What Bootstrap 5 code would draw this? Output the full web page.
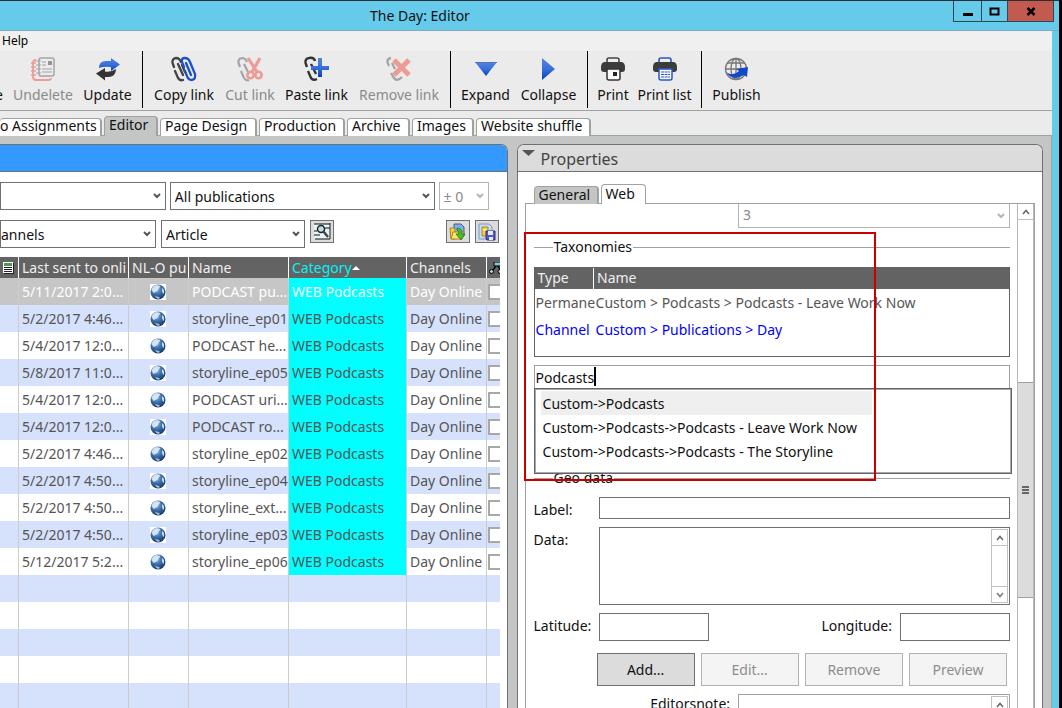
<!DOCTYPE html>
<html lang="en">
<head>
<meta charset="utf-8">
<meta name="viewport" content="width=device-width, initial-scale=1">
<title>The Day: Editor</title>
<link href="https://cdn.jsdelivr.net/npm/bootstrap@5.3.0/dist/css/bootstrap.min.css" rel="stylesheet">
<style>
  :root { --line: #a0a2a1; --dark: #636363; --edge: #707070; --sky: #66cbea; }
  body { font: 14px/20px "Noto Sans", "Open Sans", sans-serif; color: #111; background: #000; }
  button, input, select, textarea { font: inherit; color: inherit; }
  .app-window { height: 100vh; margin-right: 3px; background: var(--sky); border-top: 1px solid #2b2f36; overflow: hidden; }
  .title-bar { height: 30px; border-bottom: 1px solid #7fa9bd; }
  .title-text { flex: 1 1 0; padding-left: 370px; line-height: 30px; }
  .win-btn { height: 21px; border: 1px solid #34474f; border-top: 0; background: none; padding: 0; display: grid; place-items: center; margin-left: -1px; }
  .win-btn.sm-w { width: 29px; } .win-btn.md-w { width: 27px; }
  .win-btn.close-w { width: 47px; background: #c35a50; margin-right: 5px; }
  .frame { margin-right: 7px; background: #ebebeb; min-height: 0; }
  .menu-bar { height: 20px; background: #f0f0f0; font-size: 12px; }
  .menu-bar a { color: #000; text-decoration: none; padding-left: 2px; }
  .tool-bar { height: 60px; border-bottom: 1px solid var(--line); }
  .tool { border: 0; background: none; padding: 4px 0 0; width: 60px; margin-right: 10px; white-space: nowrap; display: flex; flex-direction: column; align-items: center; flex: none; height: 58px; }
  .tool svg { width: 28px; height: 28px; margin-bottom: 2px; flex: none; }
  .tool:disabled { color: #8a8a8a; }
  .tool:disabled svg { opacity: .42; }
  .w3 { width: 3px; } .w30 { width: 30px; } .w49 { width: 49px; } .w50 { width: 50px; } .w62 { width: 62px; } .w63 { width: 63px; } .w82 { width: 82px; } .w53 { width: 53px; } .w57 { width: 57px; }
  .tool-sep { width: 1px; height: 57px; background: #000; margin-right: 10px; flex: none; }
  .view-tabs { height: 25px; padding-top: 5px; border-bottom: 1px solid var(--line); }
  .view-tab { height: 18px; line-height: 14px; padding: 0 4px 3px; margin: 2px 2px 0 0; border: 1px solid var(--line); border-bottom: 0; border-right-width: 2px; border-radius: 4px 4px 0 0; background: #fff; white-space: nowrap; text-align: left; flex: none; }
  .view-tab.active { background: #c4c6c5; height: 20px; margin-top: 0; margin-bottom: -1px; }
  .workspace { background: #c4c6c5; padding: 8px 8px 0 0; gap: 9px; border-right: 1px solid var(--line); min-height: 0; }
  .pane { background: #fff; border: 1px solid var(--edge); border-bottom: 0; border-radius: 7px 7px 0 0; min-width: 0; overflow: hidden; }
  .pane-left { flex: 508 1 0; border-left: 0; border-top-left-radius: 0; }
  .pane-right { flex: 526 1 0; }
  .pane-head { height: 27px; border-bottom: 1px solid var(--edge); background: #dcdcdc; color: #444; font-size: 16px; }
  .pane-left .pane-head { background: #39f; }
  .combo { appearance: none; border: 1px solid var(--edge); border-radius: 0; height: 28px; padding: 1px 20px 0 4px; min-width: 0; color: #111;
    background: #fff url("data:image/svg+xml,%3Csvg xmlns='http://www.w3.org/2000/svg' viewBox='0 0 8 6'%3E%3Cpath d='M1 1l3 3 3-3' fill='none' stroke='%23555' stroke-width='2'/%3E%3C/svg%3E") no-repeat right 4px center / 8px 6px; }
  .combo:disabled { border-color: #b4b4b4; color: #888; opacity: 1; background-image: url("data:image/svg+xml,%3Csvg xmlns='http://www.w3.org/2000/svg' viewBox='0 0 8 6'%3E%3Cpath d='M1 1l3 3 3-3' fill='none' stroke='%23b4b4b4' stroke-width='2'/%3E%3C/svg%3E"); }
  .filters { padding: 10px 18px 0 0; gap: 4px; }
  .filters-two { padding: 10px 8px 9px 0; gap: 5px; }
  .icon-btn { width: 24px; height: 23px; padding: 0; border: 1px solid var(--edge); background: #dcdcdc; display: grid; place-items: center; flex: none; }
  .grid-scroll { margin-right: 7px; overflow: hidden; min-height: 0; }
  .stories { table-layout: fixed; width: 100%; border-collapse: separate; border-spacing: 0; color: #555; }
  .stories th, .stories td { padding: 0 0 0 3px; border-right: 1px solid #ccc; white-space: nowrap; overflow: hidden; font-weight: 400; height: 27px; }
  .stories th:last-child, .stories td:last-child { border-right: 0; padding-left: 1px; }
  .stories th { height: 21px; background: var(--dark); color: #efefef; border-color: #fff; }
  .stories th.sorted { color: #00f4f4; }
  .stories tbody tr:nth-child(even) { background: #d6e1fc; }
  .stories tbody tr.picked { background: #c6c6c6; color: #fff; }
  .stories .cat { background: #0ff; }
  .stories .globe { padding: 0 2px 0 0; text-align: center; }
  .stories svg { display: block; }
  .globe svg { margin: auto; }
  .stories input { appearance: none; display: block; width: 16px; height: 16px; border: 2px solid #a8a8a8; background: #fff; margin: 0; }
  .props { padding: 12px 7px 0 7px; min-height: 0; }
  .prop-tabs { padding-left: 9px; height: 20px; position: relative; z-index: 1; }
  .prop-tab { height: 18px; line-height: 14px; margin-top: 2px; padding: 0 4px 2px; border: 1px solid var(--line); border-right-width: 2px; border-bottom: 0; border-radius: 4px 4px 0 0; background: #c4c6c5; width: 65px; text-align: left; margin-right: 2px; }
  .prop-tab.active { background: #fff; height: 20px; margin-top: 0; width: 45px; border-right-width: 1px; }
  .tab-page { border: 1px solid var(--line); border-bottom: 0; margin-top: -1px; min-height: 0; position: relative; }
  .form-area { padding: 0 7px 0 8px; min-width: 0; }
  .top-combo { width: 272px; height: 24px; border-top: 0; margin-left: auto; display: block; padding-bottom: 4px; }
  .group-line { display: flex; align-items: center; gap: 1px; height: 20px; margin: 9px 0 0; font-size: 14px; font-weight: 400; line-height: 22px; }
  .group-line::before { content: ""; width: 19px; border-top: 1px solid var(--line); }
  .group-line::after { content: ""; flex: 1; border-top: 1px solid var(--line); }
  .group-line.geo-title { margin-top: 79px; }
  .taxa-box { border: 1px solid var(--dark); height: 90px; margin-top: 10px; }
  .taxa { width: 100%; table-layout: fixed; color: #555; white-space: nowrap; }
  .taxa th { background: var(--dark); color: #efefef; font-weight: 400; height: 21px; padding: 0 3px 1px; line-height: 20px; border-left: 1px solid #fff; }
  .taxa th:first-child { border-left: 0; }
  .taxa td { height: 27px; padding: 0 0 0 1px; }
  .taxa td + td { padding-left: 2px; }
  .taxa tr.own { color: #00f; }
  .entry { position: relative; margin-top: 8px; }
  .field { display: block; width: 100%; height: 22px; border: 1px solid var(--edge); border-radius: 0; padding: 0 1px; background: #fff; outline: 0; resize: none; }
  .entry .field { height: 24px; padding-top: 1px; border-color: var(--line); }
  .caret { position: absolute; left: 60px; top: 2px; width: 2px; height: 19px; background: #000; }
  .suggest { position: absolute; left: 0; right: -2px; top: 23px; height: 86px; z-index: 3; background: #fff; border: 1px solid var(--dark); outline: 1px solid #a8a8a8; outline-offset: -2px; padding: 2px 0 0 6px; margin: 0; list-style: none; }
  .suggest button { display: block; width: 331px; height: 24px; border: 0; background: none; text-align: left; padding: 2px 2px 0; white-space: nowrap; }
  .suggest .hot { background: #efefef; }
  .geo { display: grid; grid-template-columns: 65px 1fr; row-gap: 8px; margin-top: 9px; }
  .geo label { line-height: 25px; height: 22px; }
  .field.coord { width: 110px; height: 28px; }
  .field.memo { height: 78px; }
  .field.soft { border-color: var(--line); }
  .with-bar { position: relative; }
  .note-box { width: 272px; }
  .mini-bar { position: absolute; right: 2px; top: 2px; bottom: 2px; width: 17px; border: 1px solid #c0c0c0; display: flex; flex-direction: column; justify-content: space-between; background: #fff; }
  .bar-btn { height: 16px; padding: 0; border: 0; background: #fff; display: grid; place-items: center; }
  .bar-btn.up { border-bottom: 1px solid #c0c0c0; } .bar-btn.down { border-top: 1px solid #c0c0c0; }
  .geo-actions { gap: 6px; padding-left: 63px; padding-right: 3px; margin-top: 12px; }
  .act { flex: 1 1 0; height: 33px; border: 1px solid var(--edge); background: #dcdcdc; padding: 0; }
  .act:disabled { border-color: #b0b3b3; background: #f4f4f4; color: #8d8d8d; }
  .side-bar { width: 17px; border-left: 1px solid #b8b8b8; border-right: 1px solid #b8b8b8; }
  .thumb { flex: 215 1 0; background: #dcdcdc; border: solid var(--line); border-width: 1px 0; }
  .track-a { flex: 162 1 0; } .track-b { flex: 110 1 0; }
  .callout-box { position: absolute; left: -2px; top: 28px; width: 352px; height: 249px; border: 2px solid #c80000; z-index: 4; pointer-events: none; }
</style>
<script src="https://cdn.jsdelivr.net/npm/bootstrap@5.3.0/dist/js/bootstrap.bundle.min.js"></script>
</head>
<body class="overflow-hidden">
<svg width="0" height="0" class="position-absolute" aria-hidden="true">
  <defs>
    <radialGradient id="ball" cx=".4" cy=".3" r=".75"><stop offset="0" stop-color="#8fbbe6"/><stop offset=".5" stop-color="#3a6ca8"/><stop offset="1" stop-color="#16355f"/></radialGradient>
    <linearGradient id="blu" x2="0" y2="1"><stop offset="0" stop-color="#4f86e2"/><stop offset=".5" stop-color="#3a70d8"/><stop offset="1" stop-color="#0a3fc0"/></linearGradient>
    <symbol id="earth" viewBox="0 0 16 16"><rect width="16" height="16" fill="#fff"/><circle cx="8" cy="8" r="7.500" fill="url(#ball)"/><path d="M1.500 6q1-4 5-5l4 1-2 3-1 2-4 2zM12 4l2 2v3l-1 1-1-3z" fill="#e8f0f8" opacity=".85"/><path d="M5 12l4 1 1 1-2 1q-2-1-3-3z" fill="#c8dcf0" opacity=".8"/></symbol>
    <symbol id="up" viewBox="0 0 8 6"><path d="M1 5l3-3.500 3 3.500" fill="none" stroke="#666" stroke-width="1.500"/></symbol>
    <symbol id="down" viewBox="0 0 8 6"><path d="M1 1l3 3.500 3-3.500" fill="none" stroke="#777" stroke-width="1.500"/></symbol>
  </defs>
</svg>
<div class="app-window d-flex flex-column">
  <header class="title-bar d-flex flex-shrink-0">
    <div class="title-text">The Day: Editor</div>
    <button class="win-btn sm-w" aria-label="Minimize"><svg width="11" height="12"><path d="M1 9.500h10" stroke="#000" stroke-width="3"/></svg></button>
    <button class="win-btn md-w" aria-label="Maximize"><svg width="11" height="9"><path d="M1.500 1.500h8v6h-8z" fill="none" stroke="#000" stroke-width="2"/></svg></button>
    <button class="win-btn close-w" aria-label="Close"><svg width="10" height="9"><path d="M1.500 1l7 7M8.500 1l-7 7" stroke="#000" stroke-width="2.500"/></svg></button>
  </header>
  <div class="frame d-flex flex-column flex-grow-1">
    <nav class="menu-bar flex-shrink-0"><a href="#">Help</a></nav>
    <div class="tool-bar d-flex flex-shrink-0 overflow-hidden">
      <button class="tool w3" aria-label="Delete"><svg></svg><span class="align-self-end">e</span></button>
      <button class="tool" disabled><svg viewBox="0 0 28 28"><path d="M7 5q-3 0-3 3v14q0 3 3 3h12q3 0 3-2" fill="none" stroke="#f03020" stroke-width="1.800"/><path d="M2 8h5M2 12h5M2 16h5M2 20h5" stroke="#f03020" stroke-width="1.500"/><rect x="10" y="3" width="15" height="18" rx="2" fill="#eee" stroke="#444" stroke-width="1.500"/><path d="M7 6h5M7 10h5M7 14h5M7 18h5M13 7h4M13 10h4M13 14h10M13 17h10" stroke="#444" stroke-width="1.200"/><path d="M19 6h4v4h-4z" fill="#222"/></svg>Undelete</button>
      <button class="tool w49"><svg viewBox="0 0 28 28"><path d="M5 13q0-7 7-7h5V3l9 6.500-9 6.500v-4q-7-1-12 1z" fill="url(#blu)"/><path d="M22 14q0 7-7 8h-4v3.500L2 18.500 11 13v3.500q6 1 11-2.500z" fill="#333"/></svg>Update</button>
      <div class="tool-sep"></div>
      <button class="tool w62"><svg viewBox="0 0 28 28"><g fill="none" stroke-width="2.300" stroke-linecap="round"><path d="M4 12L2.500 8Q2 3.500 6 3q3.500 0 5 4M5 16l3 7q2 3 5 2M8 9l5 11M12 10l3 7" stroke="#444"/><path d="M14 12l-2-5q-1-4 3-4 3.500 0 5 4l5 12q1 5-3 6-4 0-5-4l-2-5M16 8l5 12" stroke="#1c50c8"/></g></svg>Copy link</button>
      <button class="tool w50" disabled><svg viewBox="0 0 28 28"><path d="M4 12L2.500 8Q2 3.500 6 3q3.500 0 5 4M5 16l3 7q2 3 5 2M8 9l5 10" fill="none" stroke="#444" stroke-width="2.200"/><path d="M12 3l9 14M24 3l-8 14" stroke="#f03020" stroke-width="3.200"/><circle cx="14.500" cy="20" r="3.200" fill="none" stroke="#f03020" stroke-width="2.600"/><circle cx="22.500" cy="20" r="3.200" fill="none" stroke="#f03020" stroke-width="2.600"/></svg>Cut link</button>
      <button class="tool w63"><svg viewBox="0 0 28 28"><path d="M4 12L2.500 8Q2 3.500 6 3q5-1 6 3M5 16l3 7q2 3 6 1M8 9l5 10" fill="none" stroke="#333" stroke-width="2.400"/><path d="M15 3h4v8h7v4h-7v7h-4v-7H8v-4h7z" fill="url(#blu)"/></svg>Paste link</button>
      <button class="tool w82" disabled><svg viewBox="0 0 28 28"><path d="M4 11Q0 4 6 3M7 8l3 6M6 18l3 5q3 4 8-1" fill="none" stroke="#444" stroke-width="2.300"/><path d="M9 5l15 15M24 5L9 20" stroke="#f03020" stroke-width="5"/></svg>Remove link</button>
      <div class="tool-sep"></div>
      <button class="tool w49"><svg viewBox="0 0 28 28"><path d="M3 7h22L14 21z" fill="url(#blu)"/><path d="M3 7.500h22" stroke="#5a6fb0"/></svg>Expand</button>
      <button class="tool w57"><svg viewBox="0 0 28 28"><path d="M7 3v22l13-11z" fill="url(#blu)"/></svg>Collapse</button>
      <div class="tool-sep"></div>
      <button class="tool w30"><svg viewBox="0 0 28 28"><path d="M8 8V5q0-2 2-2h8q2 0 2 2v3" fill="#eee" stroke="#444" stroke-width="1.600"/><path d="M5 7h18q3 1 3 5v2q0 3-3 3H5q-3 0-3-3v-2q0-4 3-5z" fill="#3c3c3c"/><path d="M8 14h13v9q0 2-2 2h-9q-2 0-2-2z" fill="#f8f8f8" stroke="#333" stroke-width="1.500"/><path d="M14 17h4v4h-4z" fill="#222"/></svg>Print</button>
      <button class="tool w53"><svg viewBox="0 0 28 28"><path d="M8 8V5q0-2 2-2h8q2 0 2 2v3" fill="#eee" stroke="#2458c8" stroke-width="1.600"/><path d="M5 7h18q3 1 3 5v2q0 3-3 3H5q-3 0-3-3v-2q0-4 3-5z" fill="#3c3c3c"/><path d="M8 14h13v9q0 2-2 2h-9q-2 0-2-2z" fill="#f8f8f8" stroke="#2458c8" stroke-width="1.500"/><path d="M10 17h9M10 19.500h9M10 22h9" stroke="#2458c8" stroke-dasharray="3 .600"/></svg>Print list</button>
      <div class="tool-sep"></div>
      <button class="tool w49"><svg viewBox="0 0 28 28"><g fill="none" stroke="#777" stroke-width="1.300"><circle cx="13" cy="14" r="10.500"/><ellipse cx="13" cy="14" rx="5" ry="10.500"/><path d="M13 3v22M3 14h20M5 8h16"/></g><path d="M3 17q7 5 13-1l-3-2 12-2-1 10-3-2q-11 7-18-3z" fill="#1048c8"/></svg>Publish</button>
    </div>
    <nav class="view-tabs d-flex flex-shrink-0" aria-label="Views">
      <button class="view-tab ps-0 border-start-0" style="width:102px">o Assignments</button>
      <button class="view-tab active" style="width:54px">Editor</button>
      <button class="view-tab" style="width:97px">Page Design</button>
      <button class="view-tab" style="width:86px">Production</button>
      <button class="view-tab" style="width:63px">Archive</button>
      <button class="view-tab" style="width:62px">Images</button>
      <button class="view-tab" style="width:115px">Website shuffle</button>
    </nav>
    <main class="workspace d-flex flex-grow-1">
      <section class="pane pane-left d-flex flex-column">
        <div class="pane-head flex-shrink-0"></div>
        <div class="filters d-flex flex-shrink-0">
          <select class="combo" style="flex:1 1 166px" aria-label="Source"><option></option></select>
          <select class="combo" style="flex:1 1 265px" aria-label="Publication"><option>All publications</option></select>
          <select class="combo flex-shrink-0" style="width:50px" disabled aria-label="Day offset"><option>± 0</option></select>
        </div>
        <div class="filters-two d-flex flex-shrink-0">
          <select class="combo ps-0" style="width:156px" aria-label="Channel"><option>annels</option></select>
          <select class="combo" style="width:144px" aria-label="Content type"><option>Article</option></select>
          <button class="icon-btn" aria-label="Search"><svg width="17" height="17"><path d="M0 1h17v15H0z" fill="#e8f4f8"/><path d="M16 0v16H1M0 1h16M0 8h3M0 12h6M11 5h5" fill="none" stroke="#111"/><circle cx="7" cy="6" r="3.500" fill="#bde" stroke="#222" stroke-width="1.500"/><path d="M9 8l5 6" stroke="#444" stroke-width="2.500"/></svg></button>
          <button class="icon-btn ms-auto" aria-label="Load search"><svg width="18" height="18"><path d="M5 1h7l3 3v9H5z" fill="#7ab0e8" stroke="#558"/><path d="M1 5h4l1 1v10H2z" fill="#f5d040" stroke="#a8842a"/><path d="M2 16l2-7h11l-2 7z" fill="#ffe466" stroke="#a8842a"/><path d="M8 5q5 0 5 6h3l-4 6-5-6h3q0-3-2-4z" fill="#4cba2c" stroke="#267a18" stroke-width=".800"/></svg></button>
          <button class="icon-btn" aria-label="Save search"><svg width="18" height="18"><path d="M1 1h10l3 3v12H1z" fill="#c9dcf5" stroke="#7898c0"/><path d="M4 4h6v9H4z" fill="#f5cf3c" stroke="#a8842a"/><path d="M5 7h4" stroke="#fff"/><path d="M8 8h9v9H9l-1-1z" fill="#5458c0" stroke="#2d3080"/><path d="M10 8h5v4h-5zM11 14h4v3h-4z" fill="#e4e8ff"/></svg></button>
        </div>
        <div class="grid-scroll flex-grow-1">
          <table class="stories">
            <colgroup><col style="width:19px"><col style="width:110px"><col style="width:60px"><col style="width:100px"><col style="width:118px"><col style="width:80px"><col></colgroup>
            <thead><tr>
              <th><svg width="11" height="12"><path d="M0 0h10v11H0z" fill="#fff"/><path d="M1 1h8v3H1z" fill="#4a9a40"/><path d="M4 1h3v1H4z" fill="#58b"/><path d="M1 5.500h8M1 7.500h8M1 9.500h8M10.500 1v11M1 11.500h10" stroke="#222"/></svg></th>
              <th>Last sent to onli</th><th>NL-O pu</th><th>Name</th>
              <th class="sorted"><span class="d-flex align-items-center">Category<svg width="8" height="4"><path d="M0 4l4-4 4 4z" fill="#fff"/></svg></span></th>
              <th>Channels</th>
              <th><svg width="13" height="12"><path d="M6 0h7v4H6z" fill="#7cc4d8" stroke="#000"/><path d="M8 4L4 9M10 4l3 5" stroke="#000" stroke-width="1.500"/><circle cx="3.500" cy="9.500" r="2" fill="#9dd" stroke="#000"/><circle cx="12" cy="9.500" r="2" fill="#9dd" stroke="#000"/></svg></th>
            </tr></thead>
            <tbody id="rows"></tbody>
          </table>
        </div>
      </section>
      <section class="pane pane-right d-flex flex-column">
        <div class="pane-head d-flex flex-shrink-0"><svg class="mt-1 ms-1" width="14" height="8"><path d="M0 1h13L6.500 7z" fill="#555"/></svg><span style="padding-left:5px;line-height:28px">Properties</span></div>
        <div class="props d-flex flex-column flex-grow-1">
          <div class="prop-tabs d-flex flex-shrink-0"><button class="prop-tab">General</button><button class="prop-tab active">Web</button></div>
          <div class="tab-page d-flex flex-grow-1">
            <div class="form-area flex-grow-1">
              <select class="combo top-combo" disabled aria-label="Priority"><option>3</option></select>
              <h2 class="group-line">Taxonomies</h2>
              <div class="taxa-box">
                <table class="taxa">
                  <colgroup><col style="width:59px"><col></colgroup>
                  <thead><tr><th>Type</th><th>Name</th></tr></thead>
                  <tbody><tr><td>Permane</td><td>Custom &gt; Podcasts &gt; Podcasts - Leave Work Now</td></tr>
                  <tr class="own"><td>Channel</td><td>Custom &gt; Publications &gt; Day</td></tr></tbody>
                </table>
              </div>
              <div class="entry">
                <input class="field" value="Podcasts" aria-label="Add taxonomy"><span class="caret"></span>
                <ul class="suggest">
                  <li><button class="hot">Custom-&gt;Podcasts</button></li>
                  <li><button>Custom-&gt;Podcasts-&gt;Podcasts - Leave Work Now</button></li>
                  <li><button>Custom-&gt;Podcasts-&gt;Podcasts - The Storyline</button></li>
                </ul>
              </div>
              <h2 class="group-line geo-title">Geo data</h2>
              <div class="geo">
                <label for="g-label">Label:</label><input id="g-label" class="field">
                <label for="g-data">Data:</label>
                <div class="with-bar"><textarea id="g-data" class="field memo"></textarea>
                  <div class="mini-bar"><button class="bar-btn up" aria-label="Scroll up"><svg width="8" height="6"><use href="#up"/></svg></button><button class="bar-btn down" aria-label="Scroll down"><svg width="8" height="6"><use href="#down"/></svg></button></div></div>
                <label for="g-lat">Latitude:</label>
                <div class="d-flex"><input id="g-lat" class="field coord"><label for="g-lon" class="ms-auto me-2">Longitude:</label><input id="g-lon" class="field coord"></div>
              </div>
              <div class="geo-actions d-flex"><button class="act">Add...</button><button class="act" disabled>Edit...</button><button class="act" disabled>Remove</button><button class="act" disabled>Preview</button></div>
              <div class="d-flex justify-content-end mt-2"><label for="g-note" class="me-2">Editorsnote:</label>
                <div class="with-bar note-box"><textarea id="g-note" class="field memo soft"></textarea><div class="mini-bar"><button class="bar-btn up" aria-label="Scroll up"><svg width="8" height="6"><use href="#up"/></svg></button></div></div></div>
            </div>
            <div class="side-bar d-flex flex-column flex-shrink-0">
              <button class="bar-btn up" aria-label="Scroll up"><svg width="8" height="6"><use href="#up"/></svg></button>
              <div class="track-a"></div>
              <div class="thumb d-grid align-items-center justify-content-center"><svg width="7" height="8"><path d="M0 1h7M0 4h7M0 7h7" stroke="#666" stroke-width="2"/></svg></div>
              <div class="track-b"></div>
            </div>
            <div class="callout-box"></div>
          </div>
        </div>
      </section>
    </main>
  </div>
</div>
<script>
  const stories = [
    ["5/11/2017 2:0...", "PODCAST pu..."], ["5/2/2017 4:46...", "storyline_ep01"], ["5/4/2017 12:0...", "PODCAST he..."],
    ["5/8/2017 11:0...", "storyline_ep05"], ["5/4/2017 12:0...", "PODCAST uri..."], ["5/4/2017 12:0...", "PODCAST ro..."],
    ["5/2/2017 4:46...", "storyline_ep02"], ["5/2/2017 4:50...", "storyline_ep04"], ["5/2/2017 4:50...", "storyline_ext..."],
    ["5/2/2017 4:50...", "storyline_ep03"], ["5/12/2017 5:2...", "storyline_ep06"]
  ];
  const blank = "<tr>" + "<td></td>".repeat(7) + "</tr>";
  document.getElementById("rows").innerHTML = stories.map(([sent, name], i) =>
    `<tr class="${i ? "" : "picked"}"><td></td><td>${sent}</td><td class="globe"><svg width="16" height="16"><use href="#earth"/></svg></td><td>${name}</td><td class="cat">WEB Podcasts</td><td>Day Online</td><td><input type="checkbox" aria-label="Select ${name}"></td></tr>`
  ).join("") + blank.repeat(30);
</script>
</body>
</html>
